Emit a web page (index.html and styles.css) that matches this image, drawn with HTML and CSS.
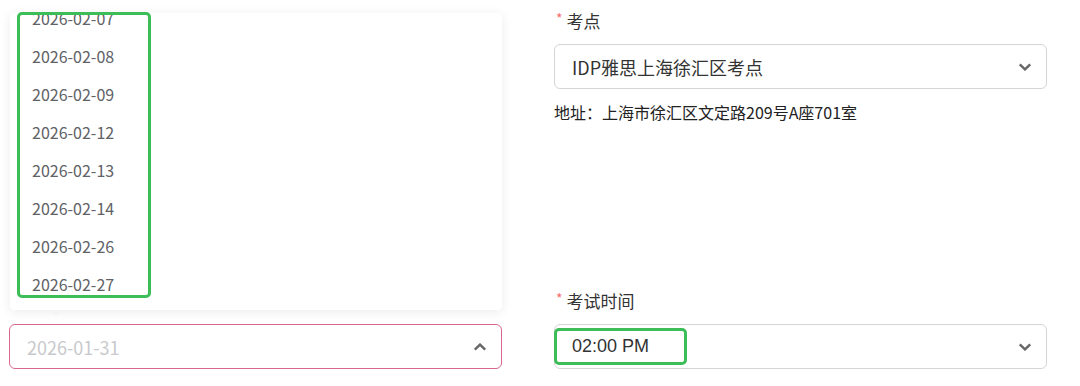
FILE: index.html
```html
<!DOCTYPE html>
<html lang="zh-CN">
<head>
    <meta charset="UTF-8">
    <meta name="viewport" content="width=device-width, initial-scale=1.0">
    <title>考试报名</title>
    <link rel="stylesheet" href="styles.css">
</head>
<body>
    <div class="form">
        <div class="col col-left">
            <div class="form-item date-item">
                <div class="select is-open">
                    <span class="placeholder">2026-01-31</span>
                    <svg class="arrow" width="14" height="8" viewBox="0 0 14 8"><path d="M1.8 6.6 L7 1.6 L12.2 6.6" fill="none" stroke="#666" stroke-width="2.4"/></svg>
                </div>
                <div class="dropdown">
                    <ul class="dropdown-list">
                        <li>2026-02-07</li>
                        <li>2026-02-08</li>
                        <li>2026-02-09</li>
                        <li>2026-02-12</li>
                        <li>2026-02-13</li>
                        <li>2026-02-14</li>
                        <li>2026-02-26</li>
                        <li>2026-02-27</li>
                    </ul>
                    <div class="mark mark-list"></div>
                    <div class="popper-arrow"></div>
                </div>
            </div>
        </div>
        <div class="col">
            <div class="form-item site-item">
                <label class="label"><span class="req">*</span>考点</label>
                <div class="select">
                    <span class="value">IDP雅思上海徐汇区考点</span>
                    <svg class="arrow" width="14" height="8" viewBox="0 0 14 8"><path d="M1.8 1.4 L7 6.4 L12.2 1.4" fill="none" stroke="#666" stroke-width="2.4"/></svg>
                </div>
                <p class="address">地址：上海市徐汇区文定路209号A座701室</p>
            </div>
            <div class="form-item">
                <label class="label"><span class="req">*</span>考试时间</label>
                <div class="select">
                    <span class="value time">02:00 PM</span>
                    <svg class="arrow" width="14" height="8" viewBox="0 0 14 8"><path d="M1.8 1.4 L7 6.4 L12.2 1.4" fill="none" stroke="#666" stroke-width="2.4"/></svg>
                    <div class="mark mark-time"></div>
                </div>
            </div>
        </div>
    </div>
</body>
</html>
```

FILE: styles.css
```css
body {
    margin: 0;
    background: #fff;
    font-family: "Noto Sans CJK SC", "Noto Sans", sans-serif;
    color: #333;
}
.form {
    display: grid;
    grid-template-columns: 493px 493px;
    column-gap: 52px;
    padding: 8px 0 0 9px;
}
.col {
    display: flex;
    flex-direction: column;
}
.col-left {
    justify-content: flex-end;
}
.form-item {
    position: relative;
}
.site-item {
    margin-bottom: 165px;
}
.label {
    display: flex;
    align-items: center;
    height: 24px;
    margin-bottom: 12px;
    font-size: 17px;
    color: #333;
}
.req {
    color: #f56c6c;
    font-size: 14px;
    margin: 0 4px 0 2px;
    position: relative;
    top: -2px;
}
.select {
    position: relative;
    display: flex;
    align-items: center;
    justify-content: space-between;
    height: 45px;
    box-sizing: border-box;
    padding: 0 14px 0 17px;
    border: 1px solid #d4d4d4;
    border-radius: 6px;
    background: #fff;
}
.select.is-open {
    border-color: #d9678e;
}
.placeholder {
    font-size: 18px;
    color: #c8c9cc;
}
.value {
    font-size: 18px;
    color: #333;
}
.time {
    font-family: "Liberation Sans", Arial, sans-serif;
}
.address {
    margin: 12px 0 0;
    font-size: 16px;
    line-height: 22px;
    color: #222;
}
.dropdown {
    position: absolute;
    left: 1px;
    bottom: calc(100% + 14px);
    width: 492px;
    height: 297px;
    background: #fff;
    border-radius: 4px;
    box-shadow: 0 2px 12px rgba(0, 0, 0, 0.08);
}
.dropdown-list {
    list-style: none;
    margin: 0;
    padding: 0;
    height: 291px;
    overflow: hidden;
}
.dropdown-list li {
    height: 38px;
    line-height: 38px;
    padding-left: 22px;
    font-size: 16px;
    color: #606266;
}
.dropdown-list li:first-child {
    margin-top: -14px;
}
.popper-arrow {
    position: absolute;
    left: 40px;
    bottom: -6px;
    width: 0;
    height: 0;
    border-left: 6px solid transparent;
    border-right: 6px solid transparent;
    border-top: 6px solid #f4f4f4;
}
.mark {
    position: absolute;
    border: 3px solid #3dbd58;
    border-radius: 5px;
    box-sizing: border-box;
}
.mark-list {
    left: 7px;
    top: -1px;
    width: 134px;
    height: 286px;
}
.mark-time {
    left: -1px;
    top: 3px;
    width: 133px;
    height: 37px;
}
```
